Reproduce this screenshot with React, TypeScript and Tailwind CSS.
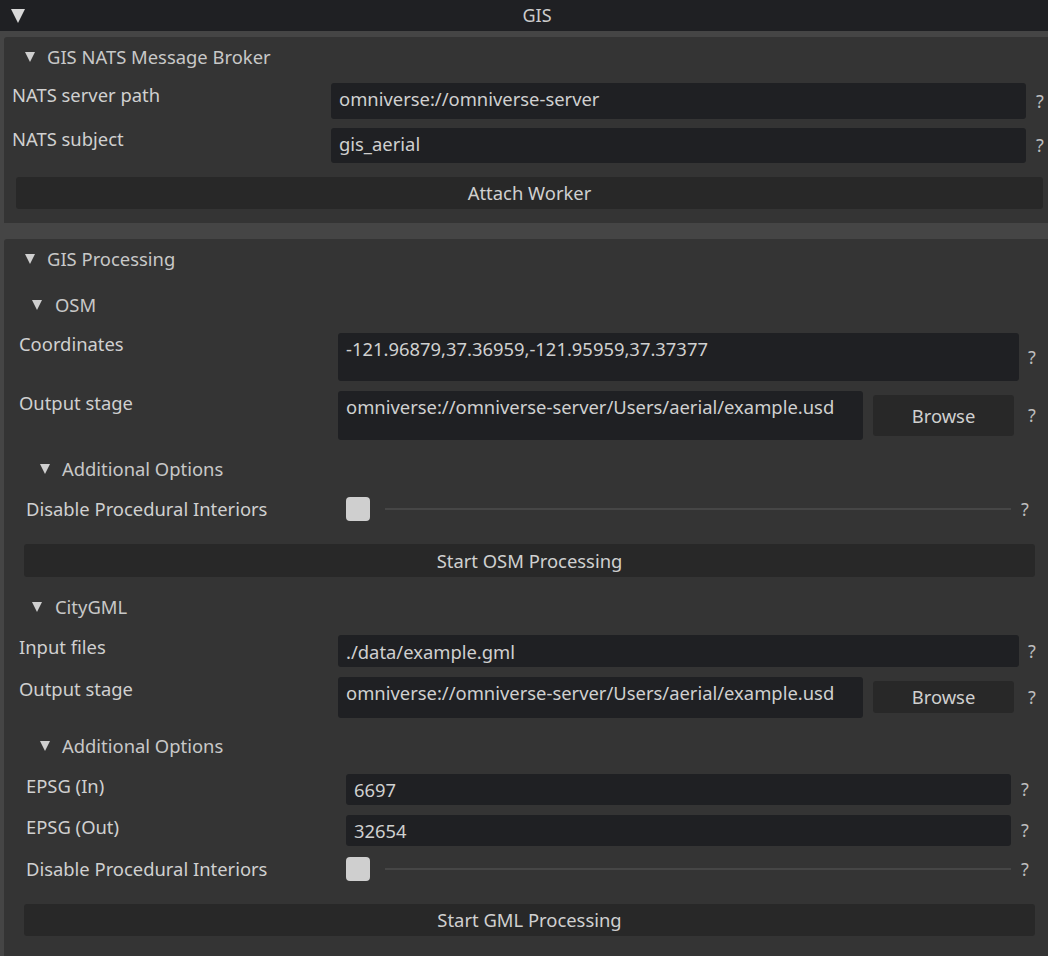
const FONT = { fontFamily: '"Noto Sans", "Open Sans", sans-serif' };

function Tri({ className }: { className: string }) {
  return (
    <svg className={className} viewBox="0 0 10 10" fill="currentColor">
      <polygon points="0,0 10,0 5,10" />
    </svg>
  );
}

function Header({ tri, text, label, mt }: { tri: string; text: string; label: string; mt: string }) {
  return (
    <div className={"flex h-[24px] items-center " + mt}>
      <Tri className={"h-[10px] w-[10px] shrink-0 text-[#cfcfcf] " + tri} />
      <span className={"leading-[24px] text-[#c8c8c8] " + text}>{label}</span>
    </div>
  );
}

function Help({ gap }: { gap: string }) {
  return <div className={"flex items-center text-[18px] text-[#bdbdbd] " + gap}>?</div>;
}

function Checkbox({ mt, labelPad }: { mt: string; labelPad: string }) {
  return (
    <div className={"flex h-[24px] items-center " + mt}>
      <div className={"w-[342px] shrink-0 leading-[24px] " + labelPad}>Disable Procedural Interiors</div>
      <div className="h-[24px] w-[24px] shrink-0 rounded-[4px] bg-[#cfcfcf]" />
      <div className="ml-[15px] h-[2px] w-[626px] bg-[#464646]" />
      <Help gap="pl-[10px]" />
    </div>
  );
}

function Button({ label, cls }: { label: string; cls: string }) {
  return (
    <div className={"flex items-center justify-center rounded-[3px] bg-[#282828] text-[#d0d0d0] " + cls}>
      {label}
    </div>
  );
}

export default function App() {
  return (
    <div
      className="h-[956px] w-[1048px] overflow-hidden bg-[#454545] text-[18.4px] text-[#d0d0d0]"
      style={FONT}
    >
      {/* window title */}
      <div className="flex h-[31px] items-center bg-[#1f2023]">
        <Tri className="ml-[10px] h-[14px] w-[16px] text-[#d8d8d8]" />
        <div className="flex-1 text-center text-[18px] leading-[31px] text-[#cccccc]">GIS</div>
      </div>

      <div className="pl-[4px] pt-[6px]">
        {/* NATS broker frame */}
        <div className="h-[186px] rounded-tl-[3px] bg-[#343434]">
          <Header tri="ml-[21px]" text="ml-[12px]" label="GIS NATS Message Broker" mt="pt-[8px] box-content" />
          <div className="mt-[14px] flex h-[36px]">
            <div className="w-[327px] shrink-0 pl-[8px] leading-[24px]">NATS server path</div>
            <div className="w-[695px] shrink-0 rounded-[3px] bg-[#1f2023] pl-[8px] pt-[4px] leading-[24px]">
              omniverse://omniverse-server
            </div>
            <Help gap="pl-[10px]" />
          </div>
          <div className="mt-[9px] flex h-[35px]">
            <div className="w-[327px] shrink-0 pl-[8px] leading-[22px]">NATS subject</div>
            <div className="w-[695px] shrink-0 rounded-[3px] bg-[#1f2023] pl-[8px] pt-[4px] leading-[24px]">
              gis_aerial
            </div>
            <Help gap="pl-[10px]" />
          </div>
          <Button label="Attach Worker" cls="ml-[12px] mt-[14px] h-[32px] w-[1027px]" />
        </div>

        {/* processing frame */}
        <div className="mt-[16px] h-[760px] rounded-tl-[3px] bg-[#343434] pt-[8px]">
          <Header tri="ml-[21px]" text="ml-[12px]" label="GIS Processing" mt="" />
          <Header tri="ml-[28px]" text="ml-[13px]" label="OSM" mt="mt-[22px]" />

          <div className="mt-[16px] flex h-[48px]">
            <div className="w-[334px] shrink-0 pl-[15px] leading-[22px]">Coordinates</div>
            <div className="w-[681px] shrink-0 rounded-[3px] bg-[#1f2023] pl-[8px] pt-[4px] leading-[24px]">
              -121.96879,37.36959,-121.95959,37.37377
            </div>
            <Help gap="pl-[9px]" />
          </div>
          <div className="mt-[10px] flex h-[49px]">
            <div className="w-[334px] shrink-0 pl-[15px] leading-[24px]">Output stage</div>
            <div className="w-[525px] shrink-0 rounded-[3px] bg-[#1f2023] pl-[8px] pt-[4px] leading-[24px]">
              omniverse://omniverse-server/Users/aerial/example.usd
            </div>
            <Button label="Browse" cls="ml-[10px] mt-[4px] h-[41px] w-[141px]" />
            <Help gap="pl-[14px]" />
          </div>

          <Header tri="ml-[36px]" text="ml-[12px]" label="Additional Options" mt="mt-[17px]" />
          <Checkbox mt="mt-[16px]" labelPad="pl-[22px]" />
          <Button label="Start OSM Processing" cls="ml-[20px] mt-[23px] h-[33px] w-[1011px]" />

          <Header tri="ml-[28px]" text="ml-[13px]" label="CityGML" mt="mt-[18px]" />
          <div className="mt-[16px] flex h-[32px]">
            <div className="w-[334px] shrink-0 pl-[15px] leading-[24px]">Input files</div>
            <div className="w-[681px] shrink-0 rounded-[3px] bg-[#1f2023] pl-[8px] pt-[5px] leading-[24px]">
              ./data/example.gml
            </div>
            <Help gap="pl-[9px]" />
          </div>
          <div className="mt-[10px] flex h-[41px]">
            <div className="w-[334px] shrink-0 pl-[15px] leading-[24px]">Output stage</div>
            <div className="w-[525px] shrink-0 rounded-[3px] bg-[#1f2023] pl-[8px] pt-[4px] leading-[24px]">
              omniverse://omniverse-server/Users/aerial/example.usd
            </div>
            <Button label="Browse" cls="ml-[10px] mt-[4px] h-[32px] w-[141px]" />
            <Help gap="pl-[14px]" />
          </div>

          <Header tri="ml-[36px]" text="ml-[12px]" label="Additional Options" mt="mt-[16px]" />
          <div className="mt-[16px] flex h-[31px]">
            <div className="w-[342px] shrink-0 pl-[22px] leading-[24px]">EPSG (In)</div>
            <div className="w-[665px] shrink-0 rounded-[3px] bg-[#1f2023] pl-[8px] pt-[4px] leading-[24px]">6697</div>
            <Help gap="pl-[10px]" />
          </div>
          <div className="mt-[10px] flex h-[31px]">
            <div className="w-[342px] shrink-0 pl-[22px] leading-[24px]">EPSG (Out)</div>
            <div className="w-[665px] shrink-0 rounded-[3px] bg-[#1f2023] pl-[8px] pt-[4px] leading-[24px]">32654</div>
            <Help gap="pl-[10px]" />
          </div>
          <Checkbox mt="mt-[11px]" labelPad="pl-[22px]" />
          <Button label="Start GML Processing" cls="ml-[20px] mt-[23px] h-[32px] w-[1011px]" />
        </div>
      </div>
    </div>
  );
}
